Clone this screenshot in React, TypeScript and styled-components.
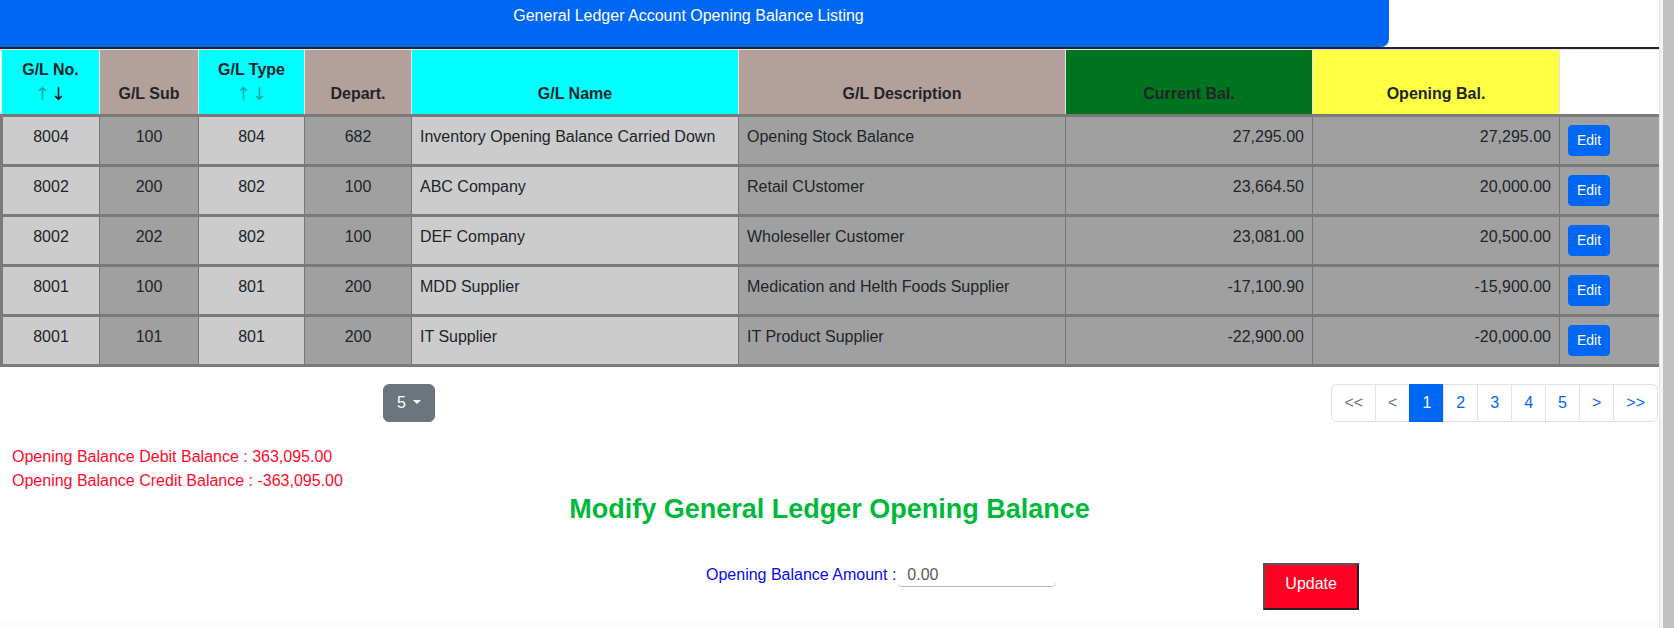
import React from "react";
import styled, { createGlobalStyle } from "styled-components";

const GlobalStyle = createGlobalStyle`
  html, body { margin: 0; padding: 0; background: #ffffff; }
  body {
    font-family: "Liberation Sans", Arial, Helvetica, sans-serif;
    font-size: 16px;
    line-height: 1.5;
    color: #212529;
  }
  * { box-sizing: border-box; }
`;

const BLUE = "#0067f4";

const Page = styled.div`
  width: 1659px;
  display: flex;
  flex-direction: column;
`;

const ScrollTrack = styled.div`
  position: fixed;
  top: 0;
  right: 0;
  bottom: 0;
  width: 15px;
  background: #f4f4f4;
  border-left: 1px solid #e6e6e6;
  display: flex;
  justify-content: flex-end;
`;

const ScrollThumb = styled.div`
  width: 11px;
  height: 100%;
  background: #c1c1c1;
`;

const TitleBar = styled.div`
  width: 1389px;
  height: 47px;
  background: ${BLUE};
  border-radius: 0 0 8px 0;
  color: #ffffff;
  text-align: center;
  padding: 4px 12px 0 0;
  line-height: 24px;
`;

const TableFrame = styled.div`
  border-top: 2px solid #212529;
`;

const Table = styled.table`
  width: 100%;
  table-layout: fixed;
  border-collapse: collapse;
`;

const Th = styled.th<{ $bg: string }>`
  background: ${(p) => p.$bg};
  border: 1px solid #e4e4e4;
  padding: 8px;
  vertical-align: bottom;
  text-align: center;
  font-weight: 700;
  line-height: 24px;
  color: #212529;
`;

const Arrows = styled.div`
  display: flex;
  justify-content: center;
  gap: 1px;
  height: 24px;
`;

const Arrow = styled.span<{ $active?: boolean }>`
  color: ${(p) => (p.$active ? "#111" : "#1ea69e")};
  font-family: "DejaVu Sans", sans-serif;
  font-size: 18px;
  line-height: 24px;
  font-weight: 400;
`;

const Row = styled.tr`
  border: 3px solid #7a7a7a;
`;

const Td = styled.td<{ $bg: string; $align: "left" | "center" | "right" }>`
  background: ${(p) => p.$bg};
  border-left: 1px solid #777;
  border-right: 1px solid #777;
  padding: 8px;
  vertical-align: top;
  text-align: ${(p) => p.$align};
  line-height: 24px;
  white-space: nowrap;
  overflow: hidden;
  color: #212529;
`;

const EditButton = styled.button`
  background: ${BLUE};
  color: #ffffff;
  border: 1px solid ${BLUE};
  border-radius: 4px;
  font-family: inherit;
  font-size: 14px;
  line-height: 21px;
  padding: 4px 8px;
  display: block;
`;

const Controls = styled.div`
  display: flex;
  justify-content: space-between;
  align-items: center;
  margin-top: 17px;
  padding-left: 383px;
  padding-right: 1px;
`;

const SizeButton = styled.button`
  display: inline-flex;
  align-items: center;
  background: #6c757d;
  color: #ffffff;
  border: 1px solid #6c757d;
  border-radius: 6px;
  font-family: inherit;
  font-size: 16px;
  line-height: 24px;
  padding: 6px 13px;
`;

const Caret = styled.span`
  display: inline-block;
  margin-left: 7px;
  width: 0;
  height: 0;
  border-top: 4px solid #ffffff;
  border-left: 4px solid transparent;
  border-right: 4px solid transparent;
  margin-bottom: 2px;
`;

const Pager = styled.ul`
  display: flex;
  list-style: none;
  margin: 0;
  padding: 0;
`;

const PageItem = styled.li<{ $active?: boolean; $disabled?: boolean }>`
  padding: 6px 12px;
  line-height: 24px;
  border: 1px solid ${(p) => (p.$active ? BLUE : "#dee2e6")};
  margin-left: -1px;
  background: ${(p) => (p.$active ? BLUE : "#ffffff")};
  color: ${(p) => (p.$active ? "#ffffff" : p.$disabled ? "#6c757d" : BLUE)};
  &:first-child { border-radius: 6px 0 0 6px; margin-left: 0; }
  &:last-child { border-radius: 0 6px 6px 0; }
`;

const Totals = styled.div`
  margin-top: 23px;
  padding-left: 12px;
  color: #ff0a2c;
  line-height: 24px;
`;

const Heading = styled.h2`
  margin: 0;
  text-align: center;
  font-size: 27px;
  line-height: 1.2;
  font-weight: 700;
  color: #00b93a;
`;

const FormRow = styled.div`
  display: flex;
  align-items: flex-start;
  margin-top: 38px;
  padding-left: 706px;
`;

const Label = styled.label`
  color: #0a0af0;
  line-height: 24px;
`;

const AmountInput = styled.input`
  width: 159px;
  height: 24px;
  margin-left: 1px;
  border: none;
  border-bottom: 1px solid #b4b4b4;
  border-radius: 5px;
  padding: 0 10px;
  font-family: inherit;
  font-size: 16px;
  color: #5a5a5a;
  background: transparent;
  outline: none;
`;

const UpdateButton = styled.button`
  margin-left: 207px;
  background: #ff0022;
  color: #ffffff;
  border: 2px solid;
  border-color: #555555 #222222 #222222 #555555;
  font-family: inherit;
  font-size: 16px;
  line-height: 19px;
  padding: 9px 20px 15px;
`;

const Footer = styled.div`
  margin-top: 8px;
  height: 24px;
  background: linear-gradient(#ffffff, #f4f4f4);
`;

type Align = "left" | "center" | "right";

const LIGHT = "#cccccc";
const DARK = "#a0a0a0";

const columns: { w: number; bg: string; cellBg: string; align: Align }[] = [
  { w: 98, bg: "#00ffff", cellBg: LIGHT, align: "center" },
  { w: 99, bg: "#b4a09b", cellBg: DARK, align: "center" },
  { w: 106, bg: "#00ffff", cellBg: LIGHT, align: "center" },
  { w: 107, bg: "#b4a09b", cellBg: DARK, align: "center" },
  { w: 327, bg: "#00ffff", cellBg: LIGHT, align: "left" },
  { w: 327, bg: "#b4a09b", cellBg: DARK, align: "left" },
  { w: 247, bg: "#00731f", cellBg: DARK, align: "right" },
  { w: 247, bg: "#ffff44", cellBg: DARK, align: "right" },
  { w: 101, bg: "#ffffff", cellBg: DARK, align: "left" },
];

const rows = [
  ["8004", "100", "804", "682", "Inventory Opening Balance Carried Down", "Opening Stock Balance", "27,295.00", "27,295.00"],
  ["8002", "200", "802", "100", "ABC Company", "Retail CUstomer", "23,664.50", "20,000.00"],
  ["8002", "202", "802", "100", "DEF Company", "Wholeseller Customer", "23,081.00", "20,500.00"],
  ["8001", "100", "801", "200", "MDD Supplier", "Medication and Helth Foods Supplier", "-17,100.90", "-15,900.00"],
  ["8001", "101", "801", "200", "IT Supplier", "IT Product Supplier", "-22,900.00", "-20,000.00"],
];

const pages = [
  { t: "<<", disabled: true },
  { t: "<", disabled: true },
  { t: "1", active: true },
  { t: "2" },
  { t: "3" },
  { t: "4" },
  { t: "5" },
  { t: ">" },
  { t: ">>" },
];

export default function App() {
  return (
    <Page>
      <GlobalStyle />
      <TitleBar>General Ledger Account Opening Balance Listing</TitleBar>
      <TableFrame>
        <Table>
          <colgroup>
            {columns.map((c, i) => (
              <col key={i} style={{ width: c.w }} />
            ))}
          </colgroup>
          <thead>
            <tr>
              <Th $bg={columns[0].bg}>
                G/L No.
                <Arrows>
                  <Arrow>↑</Arrow>
                  <Arrow $active>↓</Arrow>
                </Arrows>
              </Th>
              <Th $bg={columns[1].bg}>G/L Sub</Th>
              <Th $bg={columns[2].bg}>
                G/L Type
                <Arrows>
                  <Arrow>↑</Arrow>
                  <Arrow>↓</Arrow>
                </Arrows>
              </Th>
              <Th $bg={columns[3].bg}>Depart.</Th>
              <Th $bg={columns[4].bg}>G/L Name</Th>
              <Th $bg={columns[5].bg}>G/L Description</Th>
              <Th $bg={columns[6].bg}>Current Bal.</Th>
              <Th $bg={columns[7].bg}>Opening Bal.</Th>
              <Th $bg={columns[8].bg}></Th>
            </tr>
          </thead>
          <tbody>
            {rows.map((r, i) => (
              <Row key={i}>
                {r.map((v, j) => (
                  <Td key={j} $bg={columns[j].cellBg} $align={columns[j].align}>
                    {v}
                  </Td>
                ))}
                <Td $bg={columns[8].cellBg} $align="left">
                  <EditButton>Edit</EditButton>
                </Td>
              </Row>
            ))}
          </tbody>
        </Table>
      </TableFrame>
      <Controls>
        <SizeButton>
          5<Caret />
        </SizeButton>
        <Pager>
          {pages.map((p, i) => (
            <PageItem key={i} $active={p.active} $disabled={p.disabled}>
              {p.t}
            </PageItem>
          ))}
        </Pager>
      </Controls>
      <Totals>
        <div>Opening Balance Debit Balance : 363,095.00</div>
        <div>Opening Balance Credit Balance : -363,095.00</div>
      </Totals>
      <Heading>Modify General Ledger Opening Balance</Heading>
      <FormRow>
        <Label>Opening Balance Amount :</Label>
        <AmountInput defaultValue="0.00" />
        <UpdateButton>Update</UpdateButton>
      </FormRow>
      <Footer />
      <ScrollTrack>
        <ScrollThumb />
      </ScrollTrack>
    </Page>
  );
}
